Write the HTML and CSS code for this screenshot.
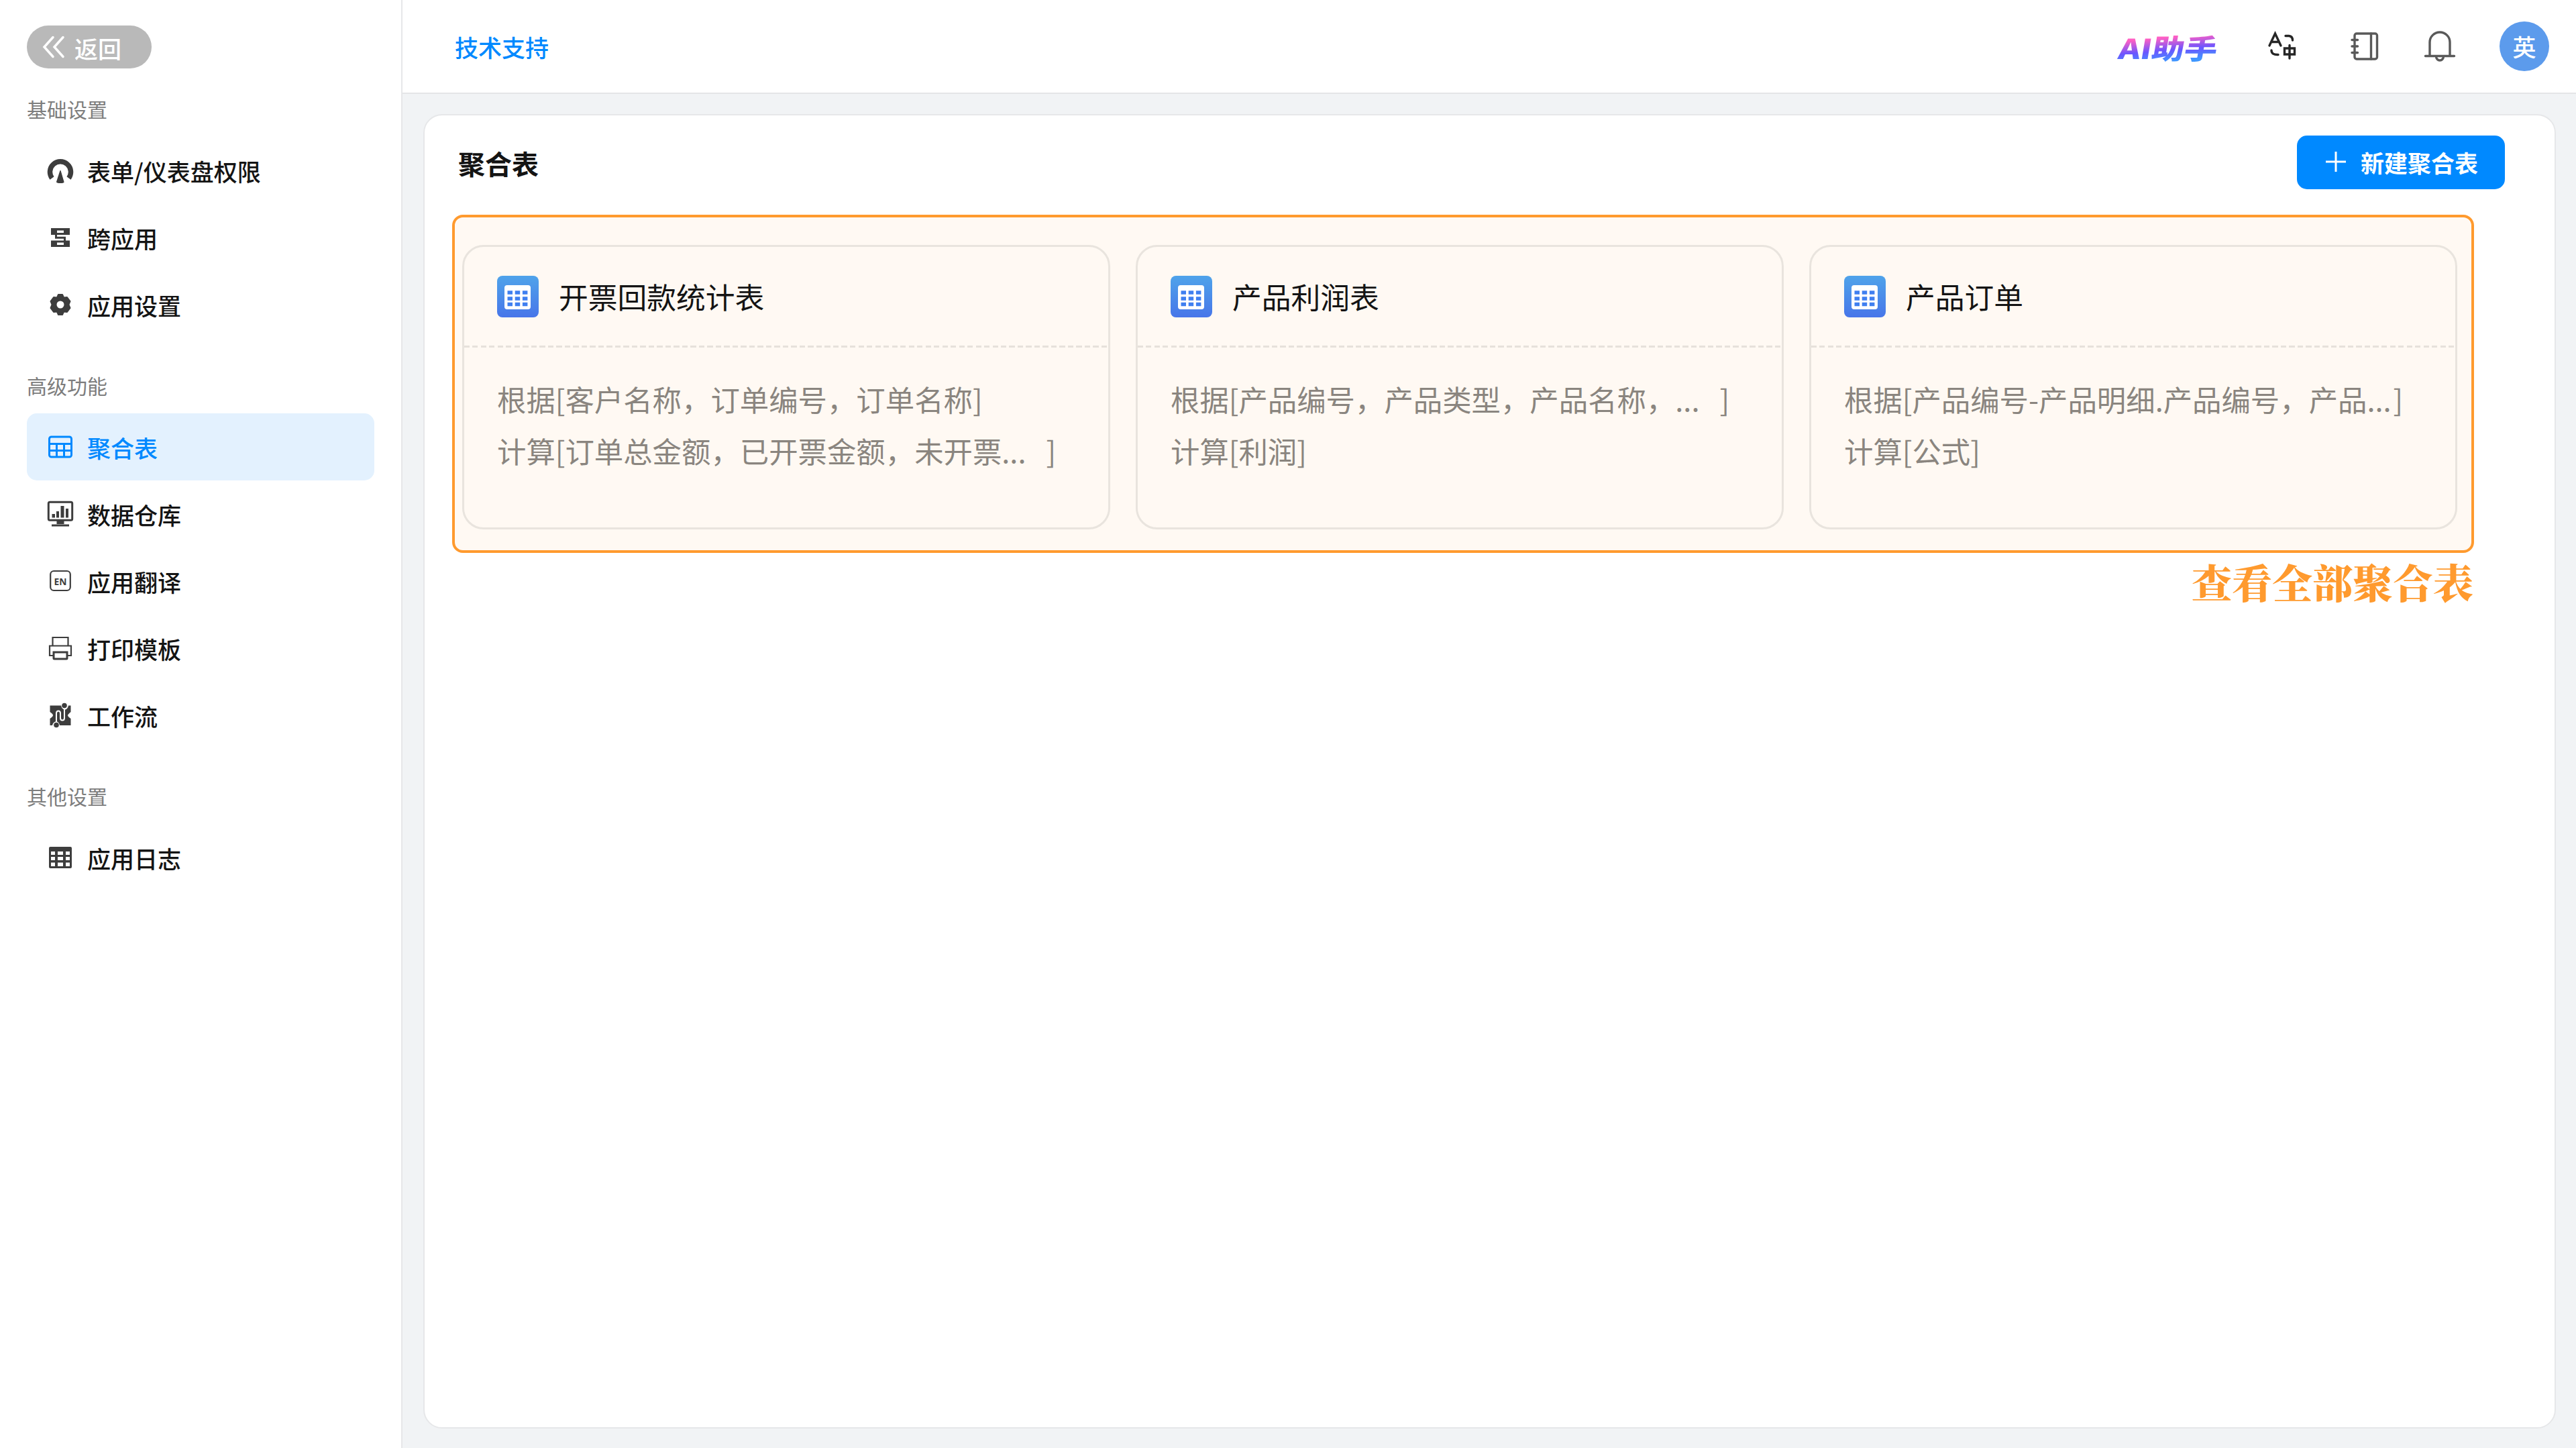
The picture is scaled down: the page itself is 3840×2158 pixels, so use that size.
FILE: index.html
```html
<!DOCTYPE html>
<html lang="zh-CN">
<head>
    <meta charset="UTF-8">
    <meta name="viewport" content="width=device-width, initial-scale=1.0">
    <title>聚合表</title>
    <link rel="stylesheet" href="styles.css">
</head>
<body>
    <aside class="sidebar">
        <a class="back-btn" href="#">
            <svg class="back-icon" viewBox="0 0 34 38"><path d="M16 4.500 L3 19 L16 33.500 M31 4.500 L18 19 L31 33.500"/></svg>
            <span>返回</span>
        </a>

        <div class="menu-title">基础设置</div>
        <nav class="menu">
            <a class="menu-item" href="#">
                <svg class="menu-icon" viewBox="0 0 40 40">
                    <path class="line gauge" d="M7.5 31.5 A15.5 15.5 0 1 1 32.500 31.5"/>
                    <path class="fill" d="M19.500 20 L14 37 Q14 39 20 39 Q26 39 25.500 37 L20.500 20 Z"/>
                </svg>
                <span>表单/仪表盘权限</span>
            </a>
            <a class="menu-item" href="#">
                <svg class="menu-icon" viewBox="0 0 40 40">
                    <path class="fill" fill-rule="evenodd" d="M6 6 H34 V16 H6 Z M15 9.500 V13 H25 V9.500 Z M6 24.500 H34 V34 H6 Z M15 27.500 V31 H25 V27.500 Z"/>
                    <path class="line" d="M13.500 15 V20.300 H26.500 V25"/>
                </svg>
                <span>跨应用</span>
            </a>
            <a class="menu-item" href="#">
                <svg class="menu-icon" viewBox="0 0 40 40">
                    <path class="fill gear" fill-rule="evenodd" d="M17 5 H23 L25 9.500 L30 9 L34.500 15 L32.500 20 L34.500 25 L30 31 L25 30.500 L23 35 H17 L15 30.500 L10 31 L5.500 25 L7.500 20 L5.500 15 L10 9 L15 9.500 Z M20 13.500 A6.500 6.500 0 1 0 20 26.500 A6.500 6.500 0 1 0 20 13.500 Z"/>
                </svg>
                <span>应用设置</span>
            </a>
        </nav>

        <div class="menu-title">高级功能</div>
        <nav class="menu">
            <a class="menu-item active" href="#">
                <svg class="menu-icon" viewBox="0 0 40 40">
                    <rect class="line" x="3.500" y="5" width="33" height="30" rx="3"/>
                    <path class="line" d="M4 15.500 H36 M4 25.500 H36 M14.500 15.500 V35 M25.500 15.500 V35"/>
                </svg>
                <span>聚合表</span>
            </a>
            <a class="menu-item" href="#">
                <svg class="menu-icon" viewBox="0 0 40 40">
                    <rect class="line" x="2.300" y="2.300" width="35.400" height="27" rx="2"/>
                    <path class="fill" d="M7.500 20 H12 V25.500 H7.500 Z M14 16 H18 V25.500 H14 Z M20.500 8 H25.500 V25.500 H20.500 Z M28 12 H32 V25.500 H28 Z M14.500 30 H25.500 V35 H14.500 Z"/>
                    <path class="line" d="M7 37 H33"/>
                </svg>
                <span>数据仓库</span>
            </a>
            <a class="menu-item" href="#">
                <svg class="menu-icon" viewBox="0 0 40 40">
                    <rect class="line thin" x="5.200" y="5" width="29.600" height="29" rx="5"/>
                    <text class="en" x="20" y="25.500" textLength="19" lengthAdjust="spacingAndGlyphs">EN</text>
                </svg>
                <span>应用翻译</span>
            </a>
            <a class="menu-item" href="#">
                <svg class="menu-icon" viewBox="0 0 40 40">
                    <path class="line thin" d="M8.500 16.500 V4 H31.500 V16.500 M9 31 H4 V16.500 H36 V31 H31"/>
                    <path class="line" d="M10 26 H30 V35 Q30 36 29 36 H11 Q10 36 10 35 Z"/>
                </svg>
                <span>打印模板</span>
            </a>
            <a class="menu-item" href="#">
                <svg class="menu-icon" viewBox="0 0 40 40">
                    <path class="fill" d="M4.500 5.500 H21 Q22 10 26 12 Q31 11 32 5.500 H35.500 V15 Q31 19 31 20 Q31 22 35.500 25 V35 H19 Q18 30 14 29 Q9 30 8 35 H4.500 V25 Q9 22 9 20 Q9 18 4.500 15 Z"/>
                    <circle class="fill" cx="26" cy="5.500" r="3.800"/>
                    <circle class="fill" cx="14" cy="34.500" r="3.800"/>
                    <path class="cut" d="M14 30 V17 Q14 13.500 17 13.500 Q20 13.500 20 17 V24 Q20 27.500 23 27.500 Q26 27.500 26 24 V11"/>
                </svg>
                <span>工作流</span>
            </a>
        </nav>

        <div class="menu-title">其他设置</div>
        <nav class="menu">
            <a class="menu-item" href="#">
                <svg class="menu-icon" viewBox="0 0 40 40">
                    <path class="fill" fill-rule="evenodd" d="M5 4 H35 Q37 4 37 6 V34 Q37 36 35 36 H5 Q3 36 3 34 V6 Q3 4 5 4 Z M6 11 V16 H12 V11 Z M16 11 V16 H24 V11 Z M28 11 V16 H34 V11 Z M6 19 V24 H12 V19 Z M16 19 V24 H24 V19 Z M28 19 V24 H34 V19 Z M6 27.500 V33 H12 V27.500 Z M16 27.500 V33 H24 V27.500 Z M28 27.500 V33 H34 V27.500 Z"/>
                </svg>
                <span>应用日志</span>
            </a>
        </nav>
    </aside>

    <div class="main">
        <header class="header">
            <a class="support" href="#">技术支持</a>
            <div class="tools">
                <span class="ai">AI助手</span>
                <svg class="tool-icon translate" viewBox="0 0 48 48">
                    <path class="dark" d="M5 23 L13.500 5 L22 23 M8 17.500 H19 M29 8.500 H34 Q39.500 9 39.500 15 M8 30 Q8 37 18 36.500"/>
                    <path class="dark" d="M27.500 27 H42.500 V36 H27.500 Z M35 22.500 V42"/>
                </svg>
                <svg class="tool-icon book" viewBox="0 0 48 48">
                    <rect x="9" y="5" width="33.500" height="38" rx="3"/>
                    <path d="M33.500 5 V43 M5 14.500 H13.500 M5 24 H13.500 M5 33.500 H13.500"/>
                </svg>
                <svg class="tool-icon bell" viewBox="0 0 48 48">
                    <path d="M9 38 V18 A15 15 0 0 1 39 18 V38 M2.500 38.500 H45.500 M18.500 39 A5.500 6 0 0 0 29.500 39"/>
                </svg>
                <div class="avatar">英</div>
            </div>
        </header>

        <section class="panel">
            <div class="panel-head">
                <h2>聚合表</h2>
                <button class="new-btn">
                    <svg class="plus" viewBox="0 0 32 32"><path d="M16 1 V31 M1 16 H31"/></svg>
                    <span>新建聚合表</span>
                </button>
            </div>

            <div class="list">
                <div class="card">
                    <div class="card-head">
                        <svg class="card-icon" viewBox="0 0 62 62">
                            <defs>
                                <linearGradient id="blue" x1="0" y1="0" x2="0" y2="1">
                                    <stop offset="0" stop-color="#4fa3ea"/>
                                    <stop offset="1" stop-color="#4776e9"/>
                                </linearGradient>
                            </defs>
                            <rect width="62" height="62" rx="8" fill="url(#blue)"/>
                            <rect x="11" y="14" width="39" height="36" rx="4" fill="#fff"/>
                            <path class="dots" d="M15.500 25 H45.500 M15.500 34 H45.500 M15.500 42.500 H45.500"/>
                        </svg>
                        <span>开票回款统计表</span>
                    </div>
                    <div class="card-body">
                        <p>根据[客户名称，订单编号，订单名称]</p>
                        <p>计算[<span class="fields">订单总金额，已开票金额，未开票...</span>]</p>
                    </div>
                </div>
                <div class="card">
                    <div class="card-head">
                        <svg class="card-icon" viewBox="0 0 62 62">
                            <rect width="62" height="62" rx="8" fill="url(#blue)"/>
                            <rect x="11" y="14" width="39" height="36" rx="4" fill="#fff"/>
                            <path class="dots" d="M15.500 25 H45.500 M15.500 34 H45.500 M15.500 42.500 H45.500"/>
                        </svg>
                        <span>产品利润表</span>
                    </div>
                    <div class="card-body">
                        <p>根据[<span class="fields">产品编号，产品类型，产品名称，...</span>]</p>
                        <p>计算[利润]</p>
                    </div>
                </div>
                <div class="card">
                    <div class="card-head">
                        <svg class="card-icon" viewBox="0 0 62 62">
                            <rect width="62" height="62" rx="8" fill="url(#blue)"/>
                            <rect x="11" y="14" width="39" height="36" rx="4" fill="#fff"/>
                            <path class="dots" d="M15.500 25 H45.500 M15.500 34 H45.500 M15.500 42.500 H45.500"/>
                        </svg>
                        <span>产品订单</span>
                    </div>
                    <div class="card-body">
                        <p>根据[<span class="fields">产品编号-产品明细.产品编号，产品...</span>]</p>
                        <p>计算[公式]</p>
                    </div>
                </div>
            </div>
            <div class="note">查看全部聚合表</div>
        </section>
    </div>
</body>
</html>
```

FILE: styles.css
```css
* {
    box-sizing: border-box;
}
body {
    margin: 0;
    height: 2158px;
    display: flex;
    font-family: "Noto Sans CJK SC", sans-serif;
    font-size: 35px;
    color: #141414;
    background: #f1f3f5;
}
a {
    color: inherit;
    text-decoration: none;
}
svg {
    flex: none;
    fill: none;
}

/* sidebar */
.sidebar {
    width: 600px;
    flex: none;
    padding: 38px 40px 0;
    background: #fff;
    border-right: 2px solid #e6e7e9;
}
.back-btn {
    display: flex;
    align-items: center;
    width: 186px;
    height: 64px;
    padding-left: 23px;
    gap: 14px;
    border-radius: 32px;
    background: #b9b9b9;
    color: #fff;
    line-height: 64px;
}
.back-btn span {
    padding-top: 3px;
    font-weight: 500;
}
.back-icon {
    width: 34px;
    height: 38px;
    stroke: #fff;
    stroke-width: 3.5;
    stroke-linecap: round;
}
.menu-title {
    height: 102px;
    padding-top: 38px;
    font-size: 30px;
    line-height: 44px;
    color: #7d7d7d;
}
.menu + .menu-title {
    height: 112px;
    padding-top: 48px;
}
.menu-item {
    display: flex;
    align-items: center;
    gap: 20px;
    height: 100px;
    padding-left: 30px;
    border-radius: 15px;
    color: #141414;
}
.menu-item span {
    font-weight: 500;
}
.menu-icon {
    width: 40px;
    height: 40px;
    color: #3d3d3d;
}
.menu-item.active {
    background: #e3f1fe;
    color: #0089ff;
}
.active .menu-icon {
    color: #0089ff;
}
.fill {
    fill: currentColor;
}
.gear {
    stroke: currentColor;
    stroke-width: 2;
    stroke-linejoin: round;
}
.line {
    stroke: currentColor;
    stroke-width: 3;
}
.thin {
    stroke-width: 2.2;
}
.gauge {
    stroke-width: 7.5;
}
.cut {
    stroke: #fff;
    stroke-width: 2;
}
.en {
    fill: currentColor;
    font: bold 15px "Noto Sans", sans-serif;
    text-anchor: middle;
}

/* top bar */
.main {
    flex: 1;
    display: flex;
    flex-direction: column;
}
.header {
    display: flex;
    justify-content: space-between;
    align-items: center;
    height: 140px;
    padding: 0 40px 0 78px;
    background: #fff;
    border-bottom: 2px solid #e4e5e7;
}
.support {
    color: #0089ff;
    font-weight: 500;
}
.tools {
    display: flex;
    align-items: center;
}
.ai {
    padding: 2px 6px 0;
    font-size: 41px;
    line-height: 60px;
    font-weight: 900;
    transform: scaleX(1.19) skewX(-8deg);
    transform-origin: right center;
    background: linear-gradient(174deg, #ff5fc4 32%, #6a55ff 58%, #3f97ff 80%);
    -webkit-background-clip: text;
    background-clip: text;
    color: transparent;
}
.tool-icon {
    width: 48px;
    height: 48px;
    stroke: #595959;
    stroke-width: 3.4;
    stroke-linecap: round;
}
.translate {
    margin-left: 65px;
}
.book {
    margin-left: 75px;
}
.bell {
    margin-left: 64px;
}
.dark {
    stroke: #262626;
}
.avatar {
    width: 74px;
    height: 74px;
    margin-left: 65px;
    border-radius: 50%;
    background: #5c9bec;
    color: #fff;
    font-weight: 500;
    line-height: 74px;
    text-align: center;
}

/* content */
.panel {
    flex: 1;
    margin: 30px 30px 29px 31px;
    padding: 30px 74px 0 41px;
    background: #fff;
    border: 2px solid #e6e7e9;
    border-radius: 28px;
}
.panel-head {
    display: flex;
    justify-content: space-between;
    height: 118px;
    padding-left: 9px;
}
h2 {
    margin: 0;
    font-size: 40px;
    line-height: 83px;
    font-weight: 700;
    color: #141414;
}
.new-btn {
    display: flex;
    align-items: center;
    width: 310px;
    height: 80px;
    padding: 0 0 2px 42px;
    gap: 21px;
    border: none;
    border-radius: 15px;
    background: #0089ff;
    color: #fff;
    font-family: inherit;
    font-size: 35px;
    font-weight: 700;
}
.plus {
    width: 32px;
    height: 32px;
    stroke: #fff;
    stroke-width: 3;
}
.list {
    display: grid;
    grid-template-columns: repeat(3, 966px);
    gap: 38px;
    width: 3014px;
    height: 504px;
    padding: 41px 11px;
    background: #fff9f3;
    border: 4px solid #ff9a2e;
    border-radius: 16px;
}
.card {
    height: 424px;
    border: 3px solid #e9e4de;
    border-radius: 32px;
}
.card-head {
    display: flex;
    align-items: center;
    gap: 30px;
    height: 150px;
    padding: 0 0 3px 49px;
    background: repeating-linear-gradient(90deg, #e6e1db 0 8px, transparent 8px 12.5px) left bottom / 100% 3px no-repeat;
    font-size: 43.75px;
}
.card-head span {
    padding-bottom: 2px;
}
.card-icon {
    width: 62px;
    height: 62px;
}
.dots {
    stroke: #3f7ff0;
    stroke-width: 5.5;
    stroke-dasharray: 7.5 3.7;
}
.card-body {
    padding: 38px 0 0 49px;
    font-size: 43.4px;
    line-height: 77px;
    color: #8a857f;
}
.card-body p {
    margin: 0;
    display: flex;
}
.fields {
    min-width: 717px;
    white-space: nowrap;
}
.note {
    width: 3013px;
    font-family: "Noto Serif CJK SC", "Noto Sans CJK SC", serif;
    font-size: 60px;
    line-height: 85px;
    font-weight: 900;
    text-align: right;
    color: #ff9a2e;
}
```
